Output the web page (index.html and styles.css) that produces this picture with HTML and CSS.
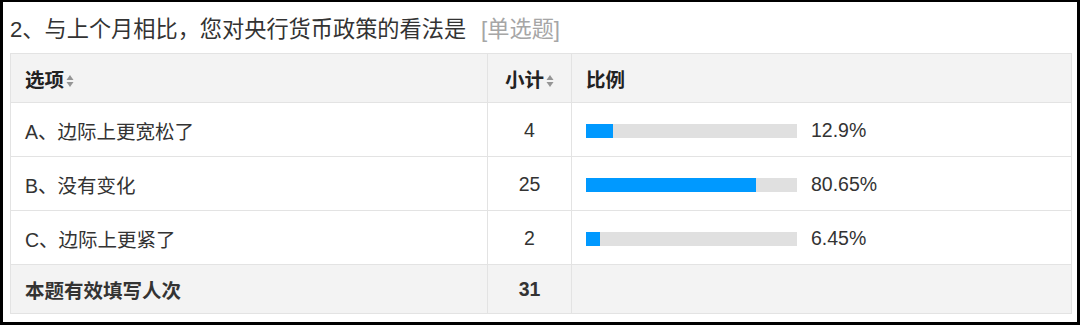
FILE: index.html
```html
<!DOCTYPE html>
<html lang="zh-CN">
<head>
<meta charset="utf-8">
<title>问卷统计</title>
<link rel="stylesheet" href="styles.css">
</head>
<body>
<div class="frame">
  <div class="title">2、与上个月相比，您对央行货币政策的看法是<span class="qtype">[单选题]</span></div>
  <table class="stats">
    <colgroup>
      <col class="c-opt">
      <col class="c-cnt">
      <col class="c-pct">
    </colgroup>
    <thead>
      <tr>
        <th class="left">选项<svg class="sort" width="8" height="14" viewBox="0 0 8 14"><path d="M4 1 L7.5 6 L0.5 6 Z" fill="#959595"/><path d="M4 13 L7.5 8 L0.5 8 Z" fill="#959595"/></svg></th>
        <th class="center">小计<svg class="sort" width="8" height="14" viewBox="0 0 8 14"><path d="M4 1 L7.5 6 L0.5 6 Z" fill="#959595"/><path d="M4 13 L7.5 8 L0.5 8 Z" fill="#959595"/></svg></th>
        <th class="left">比例</th>
      </tr>
    </thead>
    <tbody>
      <tr>
        <td class="left">A、边际上更宽松了</td>
        <td class="center">4</td>
        <td class="left"><div class="ratio"><div class="bar"><div class="fill" style="width:12.9%"></div></div><span class="pct">12.9%</span></div></td>
      </tr>
      <tr>
        <td class="left">B、没有变化</td>
        <td class="center">25</td>
        <td class="left"><div class="ratio"><div class="bar"><div class="fill" style="width:80.65%"></div></div><span class="pct">80.65%</span></div></td>
      </tr>
      <tr>
        <td class="left">C、边际上更紧了</td>
        <td class="center">2</td>
        <td class="left"><div class="ratio"><div class="bar"><div class="fill" style="width:6.45%"></div></div><span class="pct">6.45%</span></div></td>
      </tr>
    </tbody>
    <tfoot>
      <tr>
        <td class="left">本题有效填写人次</td>
        <td class="center">31</td>
        <td></td>
      </tr>
    </tfoot>
  </table>
</div>
</body>
</html>
```
FILE: styles.css
```css
html, body {
  margin: 0;
  padding: 0;
  background: #fff;
}
body {
  font-family: "Liberation Sans", Arial, "Noto Sans CJK SC", sans-serif;
  color: #333;
}
.frame {
  width: 1080px;
  height: 325px;
  box-sizing: border-box;
  border: 3px solid #000;
  border-top-width: 2px;
  padding: 0 7px 0 7px;
  background: #fff;
}
.title {
  height: 51px;
  display: flex;
  align-items: center;
  font-size: 22.2px;
  padding-bottom: 2px;
  box-sizing: border-box;
  color: #333;
  white-space: nowrap;
}
.qtype {
  color: #a6a6a6;
  margin-left: 15px;
}
.stats {
  border-collapse: collapse;
  table-layout: fixed;
  width: 1061px;
  font-size: 19.5px;
}
.c-opt { width: 477px; }
.c-cnt { width: 84px; }
.c-pct { width: 500px; }
.stats th, .stats td {
  border: 1px solid #e3e3e3;
  padding: 0 14px;
  vertical-align: middle;
  white-space: nowrap;
}
.stats thead th {
  height: 48px;
  background: #f3f3f3;
  font-weight: bold;
  color: #222;
}
.stats tbody td {
  height: 54px;
  padding-top: 2px;
  box-sizing: border-box;
}
.stats tfoot td {
  height: 48px;
  background: #f3f3f3;
  font-weight: bold;
  color: #333;
}
.left { text-align: left; }
.center { text-align: center; }
.sort {
  margin-left: 2px;
  vertical-align: -1px;
}
.ratio {
  display: flex;
  align-items: center;
  gap: 14px;
}
.bar {
  width: 211px;
  height: 14px;
  background: #e0e0e0;
  flex: none;
}
.fill {
  height: 100%;
  background: #0099ff;
}
.pct {
  color: #333;
}
```
